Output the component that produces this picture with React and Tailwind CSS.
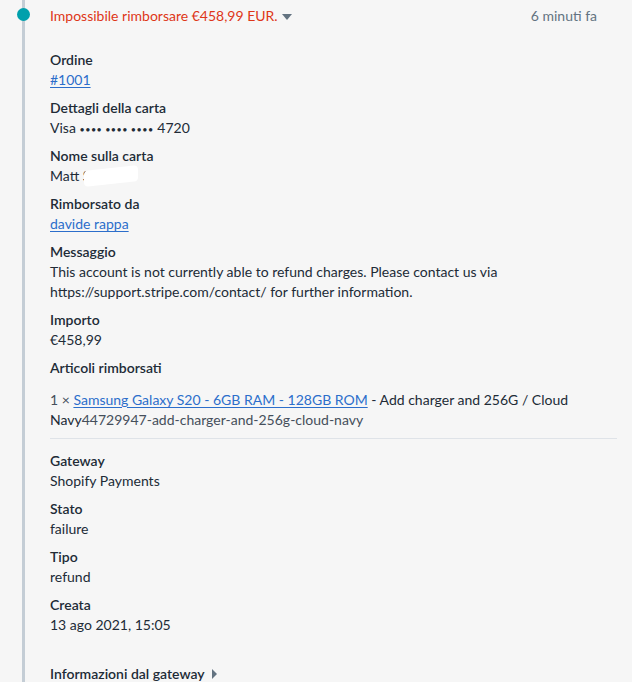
import React from 'react'

// Timeline event: failed refund with detail list
const FIELDS_TOP = [
  { label: 'Ordine', value: '#1001', link: true },
  { label: 'Dettagli della carta', card: true },
  { label: 'Nome sulla carta', value: 'Matt S', redacted: true },
  { label: 'Rimborsato da', value: 'davide rappa', link: true },
  {
    label: 'Messaggio',
    value:
      'This account is not currently able to refund charges. Please contact us via https://support.stripe.com/contact/ for further information.',
  },
  { label: 'Importo', value: '€458,99' },
]

const FIELDS_BOTTOM = [
  { label: 'Gateway', value: 'Shopify Payments' },
  { label: 'Stato', value: 'failure' },
  { label: 'Tipo', value: 'refund' },
  { label: 'Creata', value: '13 ago 2021, 15:05' },
]

function Field({ label, value, link, redacted, card }) {
  return (
    <div className="mb-2">
      <div className="font-semibold text-[#212b36]">{label}</div>
      {link ? (
        <a href="#" className="text-[#2c6ecb] underline underline-offset-2">{value}</a>
      ) : card ? (
        <div className="h-5 text-[#212b36]">
          Visa <span className="text-[9px] leading-none tracking-[0.5px]">•••• •••• ••••</span> 4720
        </div>
      ) : (
        <div className="relative text-[#212b36]">
          {value}
          {redacted && (
            <span className="absolute left-[34px] top-[2px] h-[16px] w-[54px] rounded-sm bg-white -skew-y-6" />
          )}
        </div>
      )}
    </div>
  )
}

export default function App() {
  return (
    <div
      className="min-h-[682px] w-[632px] overflow-hidden bg-[#f6f6f6] text-[14px] leading-5 text-[#212b36]"
      style={{ fontFamily: 'Lato, "Noto Sans", sans-serif' }}
    >
      <div className="relative flex">
        {/* timeline rail */}
        <div className="relative w-[50px] shrink-0">
          <div className="absolute left-[22px] top-0 h-[682px] w-[3px] bg-[#c4cdd5]" />
          <div className="absolute left-[17px] top-[8px] h-[13px] w-[13px] rounded-full bg-[#00a0ac]" />
        </div>

        <div className="flex-1 pr-[15px] pt-[6px]">
          <div className="flex items-center justify-between">
            <div className="flex items-center gap-[4px] text-[#de3618]">
              <span>Impossibile rimborsare €458,99 EUR.</span>
              <svg width="10" height="6" viewBox="0 0 10 6" className="mt-[1px]">
                <path d="M0 0h10L5 6z" fill="#637381" />
              </svg>
            </div>
            <span className="pr-[20px] text-[#637381]">6 minuti fa</span>
          </div>

          <div className="pt-6">
            {FIELDS_TOP.map(f => (
              <Field key={f.label} {...f} />
            ))}

            <div className="font-semibold">Articoli rimborsati</div>
            <p className="mt-3 border-b border-[#dfe3e8] pb-2 text-[#454f5b]">
              1 ×{' '}
              <a href="#" className="text-[#2c6ecb] underline underline-offset-2">
                Samsung Galaxy S20 - 6GB RAM - 128GB ROM
              </a>{' '}
              <span className="text-[#212b36]">- Add charger and 256G / Cloud Navy</span>
              44729947-add-charger-and-256g-cloud-navy
            </p>

            <div className="pt-3">
              {FIELDS_BOTTOM.map(f => (
                <Field key={f.label} {...f} />
              ))}
            </div>

            <div className="mt-[29px] flex items-center gap-[7px] font-semibold">
              <span>Informazioni dal gateway</span>
              <svg width="5" height="10" viewBox="0 0 5 10">
                <path d="M0 0l5 5-5 5z" fill="#637381" />
              </svg>
            </div>
          </div>
        </div>
      </div>
    </div>
  )
}
